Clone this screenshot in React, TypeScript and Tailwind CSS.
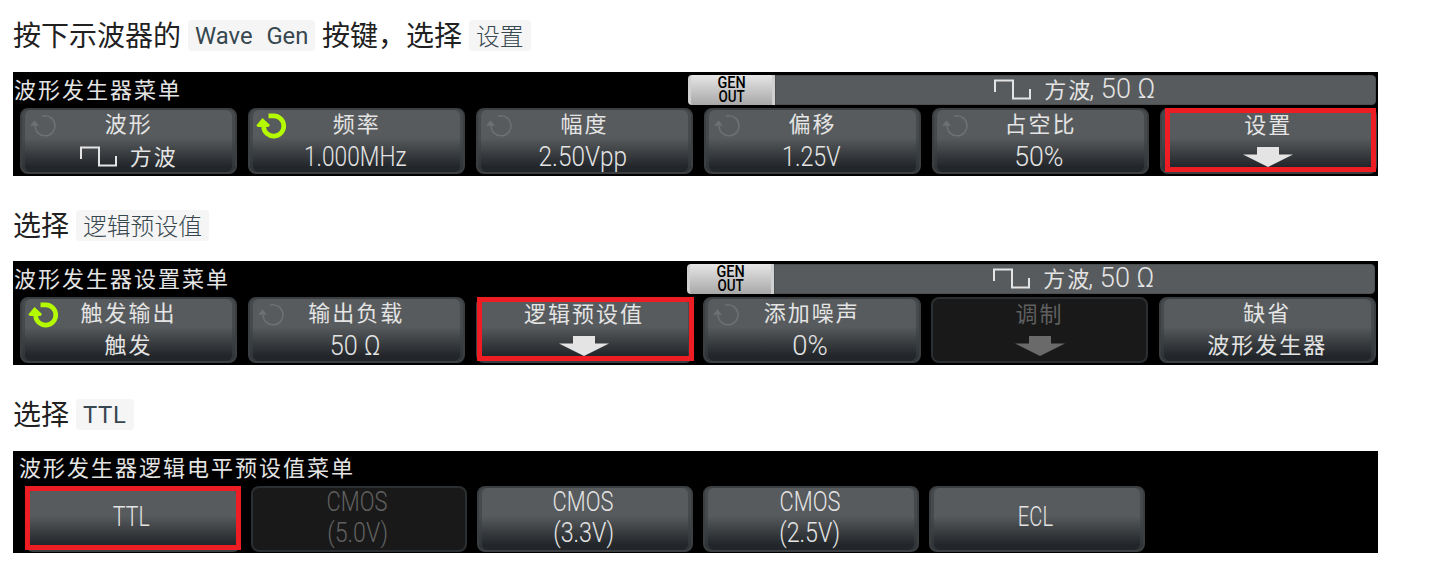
import React from "react";

const cjk = "font-['Roboto','Noto_Sans_CJK_SC',sans-serif]";

function Cn({ children }: { children: React.ReactNode }) {
  return <span className="text-[22px] tracking-[2px]">{children}</span>;
}

function Lat({ children, fit }: { children: React.ReactNode; fit: string }) {
  return <span className={`mr-[3px] inline-block text-[28px] font-light ${fit}`}>{children}</span>;
}

function SquareWave() {
  return (
    <svg width="38" height="21" viewBox="0 0 38 21" fill="none" stroke="#e4e4e4" strokeWidth="2" className="-mt-0.5 shrink-0">
      <path d="M1 13V1.5H19V19.5H36V10" />
    </svg>
  );
}

function Knob({ active }: { active?: boolean }) {
  return active ? (
    <svg width="32" height="28" viewBox="0 0 32 28" className="absolute top-[2px] left-[6px]">
      <path d="M12.5 3.9H17.5A10.1 10.1 0 1 1 7.6 15" fill="none" stroke="#b4fa00" strokeWidth="4.7" />
      <path d="M0.3 13.5L6.5 6L14 13L12.5 15H2Z" fill="#b4fa00" />
    </svg>
  ) : (
    <svg width="32" height="28" viewBox="0 0 32 28" className="absolute top-[2px] left-[6px]">
      <path d="M14 4.3A10 10 0 1 1 7 14" fill="none" stroke="#6e7071" strokeWidth="1.5" />
      <path d="M2 13.8L6.5 8.5L11 13.8Z" fill="#6e7071" />
    </svg>
  );
}

function DownArrow({ color = "#e4e4e4" }: { color?: string }) {
  return (
    <svg width="52" height="20" viewBox="0 0 52 20" className="shrink-0">
      <path d="M15 0H37V7.5H51L26 20L1 7.5H15Z" fill={color} />
    </svg>
  );
}

type KeyProps = {
  first: React.ReactNode;
  second?: React.ReactNode;
  knob?: "on" | "off";
  disabled?: boolean;
  mark?: string;
};

function SoftKey({ first, second, knob, disabled, mark }: KeyProps) {
  const skin = disabled
    ? "border-[#2c2f31] bg-[#191919] text-[#606060]"
    : "border-[#3b3f42] bg-linear-to-b from-[#575b5d] from-45% to-[#22262a] to-92% text-[#e4e4e4] shadow-[inset_3px_0_0_#3b3f4299,inset_-3px_0_0_#3b3f4299]";
  return (
    <div className={`relative flex min-w-0 flex-1 flex-col items-center justify-center rounded-[8px] border-2 ${skin}`}>
      {knob && <Knob active={knob === "on"} />}
      <div className="flex h-8 items-center justify-center whitespace-nowrap leading-8">{first}</div>
      {second && <div className="flex h-8 items-center justify-center whitespace-nowrap leading-8">{second}</div>}
      {mark && <div className={`absolute border-[5px] border-[#ee1c23] ${mark}`} />}
    </div>
  );
}

function GenStatus() {
  return (
    <div className="flex h-[30px] w-[688px] rounded-[4px] text-[#e4e4e4]">
      <div className="flex w-[87px] flex-col items-center justify-center rounded-l-[4px] border-x-[3px] border-[#d0d0d0] bg-linear-to-b from-[#e6e6e6] to-[#a8a8a8] text-[16px] leading-[14px] font-medium text-black">
        <span className="inline-block scale-x-[.9]">GEN</span>
        <span className="inline-block scale-x-[.84]">OUT</span>
      </div>
      <div className="flex flex-1 items-center justify-center rounded-r-[4px] border border-[#4b4f51] bg-[#575b5d] pl-1 leading-7 whitespace-nowrap">
        <SquareWave />
        <span className="ml-3"><Cn>方波</Cn></span>
        <Lat fit="origin-left scale-x-[.97] -ml-[3px] -mt-[3px]">, 50 Ω</Lat>
      </div>
    </div>
  );
}

function Chip({ children, latin }: { children: React.ReactNode; latin?: boolean }) {
  return (
    <code
      className={`mr-[6.5px] ml-[7px] flex h-[31px] items-center rounded-[4px] bg-[#f5f5f5] px-[7px] text-[23.8px] leading-[31px] text-[#37474f] ${
        latin ? "font-['Roboto',sans-serif] [word-spacing:8px]" : "font-['Noto_Sans_CJK_SC',sans-serif] font-light"
      }`}
    >
      <span className={latin ? "pt-0.5" : "-mt-0.5"}>{children}</span>
    </code>
  );
}

export default function App() {
  return (
    <main className={`h-[570px] w-[1455px] overflow-hidden bg-white pl-[13px] text-[28px] text-[#212121] ${cjk}`}>
      <p className="flex h-[72px] items-start pt-5 leading-[31px]">
        <span className="pt-px">按下示波器的</span>
        <Chip latin>Wave Gen</Chip>
        <span className="pt-px">按键，选择</span>
        <Chip>设置</Chip>
      </p>
      <section className="h-[104px] w-[1365px] bg-black">
        <div className="flex h-9 justify-between pt-[3px] pr-[2px] pl-[1px] text-[#e4e4e4]">
          <span className="leading-[27px]"><Cn>波形发生器菜单</Cn></span>
          <GenStatus />
        </div>
        <div className="flex h-[66px] gap-[10.5px] pr-[1px] pl-[7px]">
          <SoftKey knob="off" first={<Cn>波形</Cn>} second={<><SquareWave /><span className="ml-3"><Cn>方波</Cn></span></>} />
          <SoftKey knob="on" first={<Cn>频率</Cn>} second={<Lat fit="scale-x-[.81]">1.000MHz</Lat>} />
          <SoftKey knob="off" first={<Cn>幅度</Cn>} second={<Lat fit="scale-x-[.87]">2.50Vpp</Lat>} />
          <SoftKey knob="off" first={<Cn>偏移</Cn>} second={<Lat fit="scale-x-[.83]">1.25V</Lat>} />
          <SoftKey knob="off" first={<Cn>占空比</Cn>} second={<Lat fit="scale-x-[.95]">50%</Lat>} />
          <SoftKey first={<Cn>设置</Cn>} second={<DownArrow />} mark="-top-[2px] left-[3px] -right-[1px] bottom-0" />
        </div>
      </section>
      <p className="flex h-[85px] items-start pt-[34px] leading-[31px]">
        <span className="pt-px">选择</span>
        <Chip>逻辑预设值</Chip>
      </p>
      <section className="h-[104px] w-[1365px] bg-black">
        <div className="flex h-9 justify-between pt-[3px] pr-[3px] pl-[1px] text-[#e4e4e4]">
          <span className="leading-[27px]"><Cn>波形发生器设置菜单</Cn></span>
          <GenStatus />
        </div>
        <div className="flex h-[66px] gap-[10.5px] pr-[2px] pl-[7px]">
          <SoftKey knob="on" first={<Cn>触发输出</Cn>} second={<Cn>触发</Cn>} />
          <SoftKey knob="off" first={<Cn>输出负载</Cn>} second={<Lat fit="scale-x-[.9]">50 Ω</Lat>} />
          <SoftKey first={<Cn>逻辑预设值</Cn>} second={<DownArrow />} mark="-top-[2px] -left-[1px] -right-[3px] bottom-0" />
          <SoftKey knob="off" first={<Cn>添加噪声</Cn>} second={<Lat fit="scale-x-[.98]">0%</Lat>} />
          <SoftKey disabled first={<Cn>调制</Cn>} second={<DownArrow color="#6a6a6a" />} />
          <SoftKey first={<Cn>缺省</Cn>} second={<Cn>波形发生器</Cn>} />
        </div>
      </section>
      <p className="flex h-[86px] items-start pt-[34px] leading-[31px]">
        <span className="pt-px">选择</span>
        <Chip latin><span className="tracking-[0.7px]">TTL</span></Chip>
      </p>
      <section className="h-[102px] w-[1365px] bg-black">
        <div className="flex h-[35px] pt-[2px] pl-[6px] text-[#e4e4e4]">
          <span className="leading-[27px]"><Cn>波形发生器逻辑电平预设值菜单</Cn></span>
        </div>
        <div className="flex h-[66px] w-[1132px] gap-[10.5px] pl-3">
          <SoftKey first={<Lat fit="-mt-1 scale-x-[.76]">TTL</Lat>} mark="-top-[2px] -left-[2px] -right-[2px] bottom-0" />
          <SoftKey disabled first={<Lat fit="-mt-[3px] scale-x-[.78]">CMOS</Lat>} second={<Lat fit="-mt-[3px] scale-x-[.83]">(5.0V)</Lat>} />
          <SoftKey first={<Lat fit="-mt-[3px] scale-x-[.78]">CMOS</Lat>} second={<Lat fit="-mt-[3px] scale-x-[.83]">(3.3V)</Lat>} />
          <SoftKey first={<Lat fit="-mt-[3px] scale-x-[.78]">CMOS</Lat>} second={<Lat fit="-mt-[3px] scale-x-[.83]">(2.5V)</Lat>} />
          <SoftKey first={<Lat fit="-mt-1 scale-x-[.72]">ECL</Lat>} />
        </div>
      </section>
    </main>
  );
}
